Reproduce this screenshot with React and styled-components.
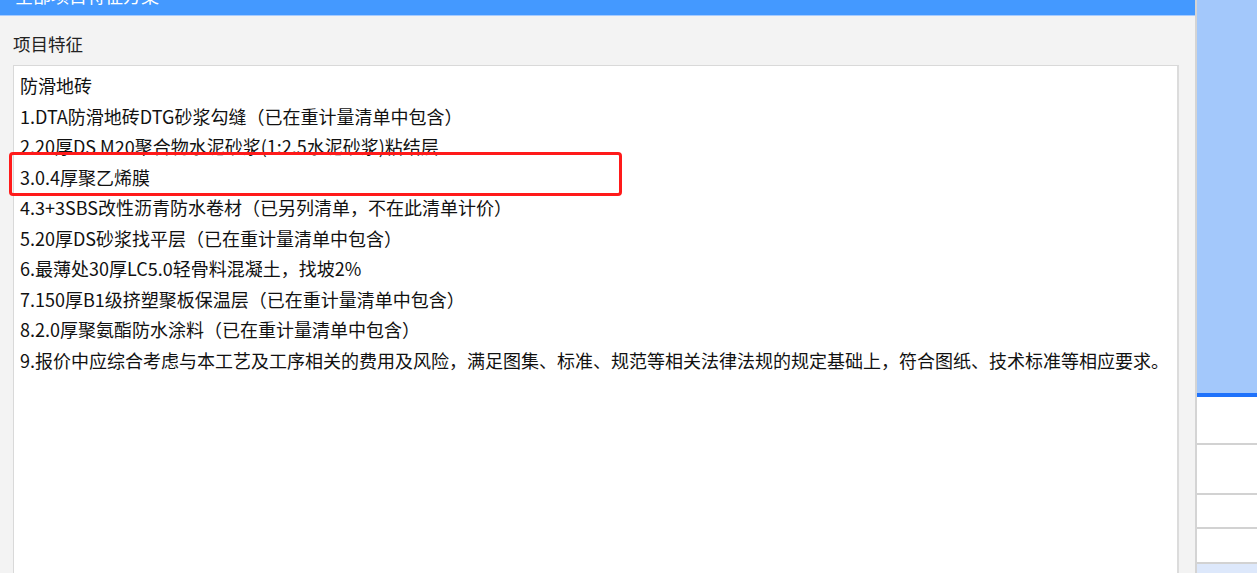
import React from "react";
import styled, { createGlobalStyle } from "styled-components";

const Global = createGlobalStyle`
  html, body { margin: 0; padding: 0; overflow: hidden; }
  body { font-family: "Microsoft YaHei", "Noto Sans CJK SC", "Noto Sans", sans-serif; }
`;

const Screen = styled.div`
  display: flex;
  width: 1257px;
  height: 573px;
  overflow: hidden;
`;

const Dialog = styled.div`
  width: 1195px;
  flex: none;
  display: flex;
  flex-direction: column;
  background: #f3f3f3;
`;

const TitleBar = styled.div`
  height: 15px;
  flex: none;
  background: #4499ff;
  border-bottom: 1px solid #a6cbff;
  overflow: hidden;
  padding-left: 15px;
`;

const Title = styled.div`
  color: #ffffff;
  font-size: 18px;
  line-height: 22px;
  margin-top: -16px;
  font-family: "Noto Sans CJK SC", sans-serif;
`;

const Body = styled.div`
  flex: 1;
  display: flex;
  flex-direction: column;
  padding: 16px 16px 0 13px;
  min-height: 0;
`;

const Label = styled.div`
  font-family: "Noto Sans CJK SC", sans-serif;
  font-size: 17.5px;
  line-height: 24px;
  color: #222;
  margin-bottom: 9px;
`;

const TextBox = styled.div`
  flex: 1;
  background: #ffffff;
  border: 1px solid #d9d9d9;
  border-right: 2px solid #dcdcdc;
  border-bottom: none;
  padding: 4px 6px 0 6px;
`;

const Line = styled.div`
  position: relative;
  font-family: "Noto Sans CJK SC", sans-serif;
  font-size: 18px;
  line-height: 30.5px;
  color: #111;
  white-space: nowrap;
  ${(p) =>
    p.$marked &&
    `
    &::after {
      content: "";
      position: absolute;
      left: -11px;
      top: -10px;
      width: 613px;
      height: 44px;
      border: 3.5px solid #ff1a1a;
      border-radius: 4px;
      box-sizing: border-box;
    }
  `}
`;

const Side = styled.div`
  flex: 1;
  display: flex;
  flex-direction: column;
  border-left: 2px solid #d4d4d4;
  background: #dde8fb;
`;

const SideHead = styled.div`
  height: 393px;
  flex: none;
  background: #a3c8fb;
  border-bottom: 4px solid #1f72fb;
`;

const SideRow = styled.div`
  height: ${(p) => p.$h}px;
  flex: none;
  background: #ffffff;
  border-bottom: 2px solid #d2d2d2;
`;

const lines = [
  "防滑地砖",
  "1.DTA防滑地砖DTG砂浆勾缝（已在重计量清单中包含）",
  "2.20厚DS M20聚合物水泥砂浆(1:2.5水泥砂浆)粘结层",
  "3.0.4厚聚乙烯膜",
  "4.3+3SBS改性沥青防水卷材（已另列清单，不在此清单计价）",
  "5.20厚DS砂浆找平层（已在重计量清单中包含）",
  "6.最薄处30厚LC5.0轻骨料混凝土，找坡2%",
  "7.150厚B1级挤塑聚板保温层（已在重计量清单中包含）",
  "8.2.0厚聚氨酯防水涂料（已在重计量清单中包含）",
  "9.报价中应综合考虑与本工艺及工序相关的费用及风险，满足图集、标准、规范等相关法律法规的规定基础上，符合图纸、技术标准等相应要求。",
];

export default function App() {
  return (
    <>
      <Global />
      <Screen>
        <Dialog>
          <TitleBar>
            <Title>全部项目特征方案</Title>
          </TitleBar>
          <Body>
            <Label>项目特征</Label>
            <TextBox>
              {lines.map((t, i) => (
                <Line key={i} $marked={i === 3}>
                  {t}
                </Line>
              ))}
            </TextBox>
          </Body>
        </Dialog>
        <Side>
          <SideHead />
          <SideRow $h={46} />
          <SideRow $h={48} />
          <SideRow $h={32} />
          <SideRow $h={33} />
        </Side>
      </Screen>
    </>
  );
}
